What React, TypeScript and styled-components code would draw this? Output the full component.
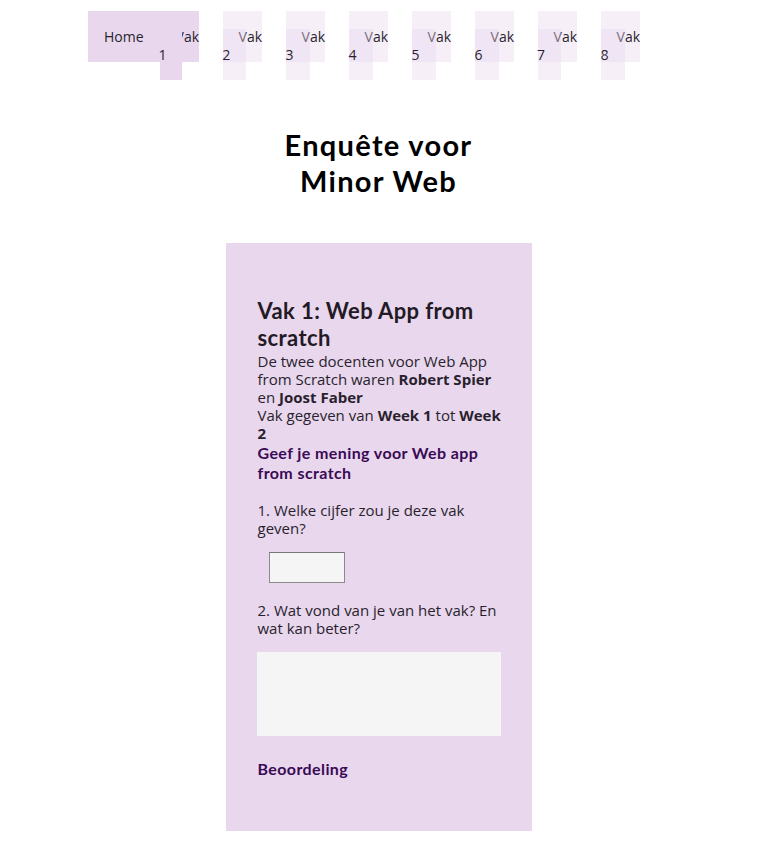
import React from "react";
import styled, { createGlobalStyle } from "styled-components";

const GlobalStyle = createGlobalStyle`
  body {
    margin: 0;
    background: #ffffff;
    font-family: "Open Sans", "DejaVu Sans", sans-serif;
    color: #2a1f2e;
  }
`;

const Nav = styled.ul`
  display: flex;
  align-items: flex-start;
  list-style: none;
  margin: 0;
  padding: 28px 0 0 88px;
  font-size: 14px;
  line-height: 18px;
  font-variant-numeric: proportional-nums;
`;

const NavItem = styled.li<{ $home?: boolean }>`
  width: ${(p) => (p.$home ? "auto" : "41px")};
  margin-right: ${(p) => (p.$home ? "0" : "22px")};
`;

const NavLink = styled.a<{ $active?: boolean }>`
  padding: 16px;
  color: #2a1f2e;
  text-decoration: none;
  background: ${(p) =>
    p.$active ? "#e8d7ed" : "rgba(232, 215, 237, 0.4)"};
`;

const Title = styled.h1`
  width: 210px;
  margin: 63px auto 44px;
  text-align: center;
  font-family: Lato, "Open Sans", sans-serif;
  font-size: 29px;
  line-height: 36px;
  letter-spacing: 1.3px;
  font-weight: 700;
  color: #000000;
`;

const Card = styled.section`
  width: 306px;
  box-sizing: border-box;
  margin: 0 auto;
  padding: 54px 29px 52px 32px;
  background: #e8d7ed;
`;

const CourseTitle = styled.h2`
  margin: 0 0 1px;
  font-family: Lato, "Open Sans", sans-serif;
  font-size: 22px;
  line-height: 27px;
  letter-spacing: 0.4px;
  font-weight: 700;
  color: #231a26;
`;

const Text = styled.p`
  margin: 0;
  font-size: 15px;
  line-height: 18px;
`;

const Strong = styled.b`
  font-weight: 700;
`;

const Prompt = styled.p<{ $gap?: number }>`
  margin: ${(p) => p.$gap ?? 1}px 0 0;
  font-family: Lato, "Open Sans", sans-serif;
  font-size: 16px;
  line-height: 20px;
  letter-spacing: 0.4px;
  font-weight: 700;
  color: #3a0a55;
`;

const Question = styled.label`
  display: block;
  margin-top: 18px;
  font-size: 15px;
  line-height: 18px;
`;

const GradeInput = styled.input`
  display: block;
  width: 76px;
  height: 31px;
  box-sizing: border-box;
  margin: 15px 0 0 11px;
  border: 1px solid #8a8a8a;
  border-top-color: #767676;
  background: #f5f5f5;
`;

const Feedback = styled.textarea`
  display: block;
  width: 244px;
  height: 84px;
  box-sizing: border-box;
  margin: 15px 0 0 -1px;
  border: none;
  background: #f5f5f5;
  resize: none;
`;

const vakken = [1, 2, 3, 4, 5, 6, 7, 8];

export default function App() {
  return (
    <>
      <GlobalStyle />
      <nav>
        <Nav>
          <NavItem $home>
            <NavLink href="#" $active>
              Home
            </NavLink>
          </NavItem>
          {vakken.map((n) => (
            <NavItem key={n}>
              <NavLink href="#" $active={n === 1}>
                Vak {n}
              </NavLink>
            </NavItem>
          ))}
        </Nav>
      </nav>
      <Title>Enquête voor Minor Web</Title>
      <Card>
        <CourseTitle>Vak 1: Web App from scratch</CourseTitle>
        <Text>
          De twee docenten voor Web App from Scratch waren{" "}
          <Strong>Robert Spier</Strong> en <Strong>Joost Faber</Strong>
        </Text>
        <Text>
          Vak gegeven van <Strong>Week 1</Strong> tot <Strong>Week 2</Strong>
        </Text>
        <Prompt>Geef je mening voor Web app from scratch</Prompt>
        <Question>
          1. Welke cijfer zou je deze vak geven?
          <GradeInput type="text" />
        </Question>
        <Question>
          2. Wat vond van je van het vak? En wat kan beter?
          <Feedback />
        </Question>
        <Prompt $gap={23}>Beoordeling</Prompt>
      </Card>
    </>
  );
}
